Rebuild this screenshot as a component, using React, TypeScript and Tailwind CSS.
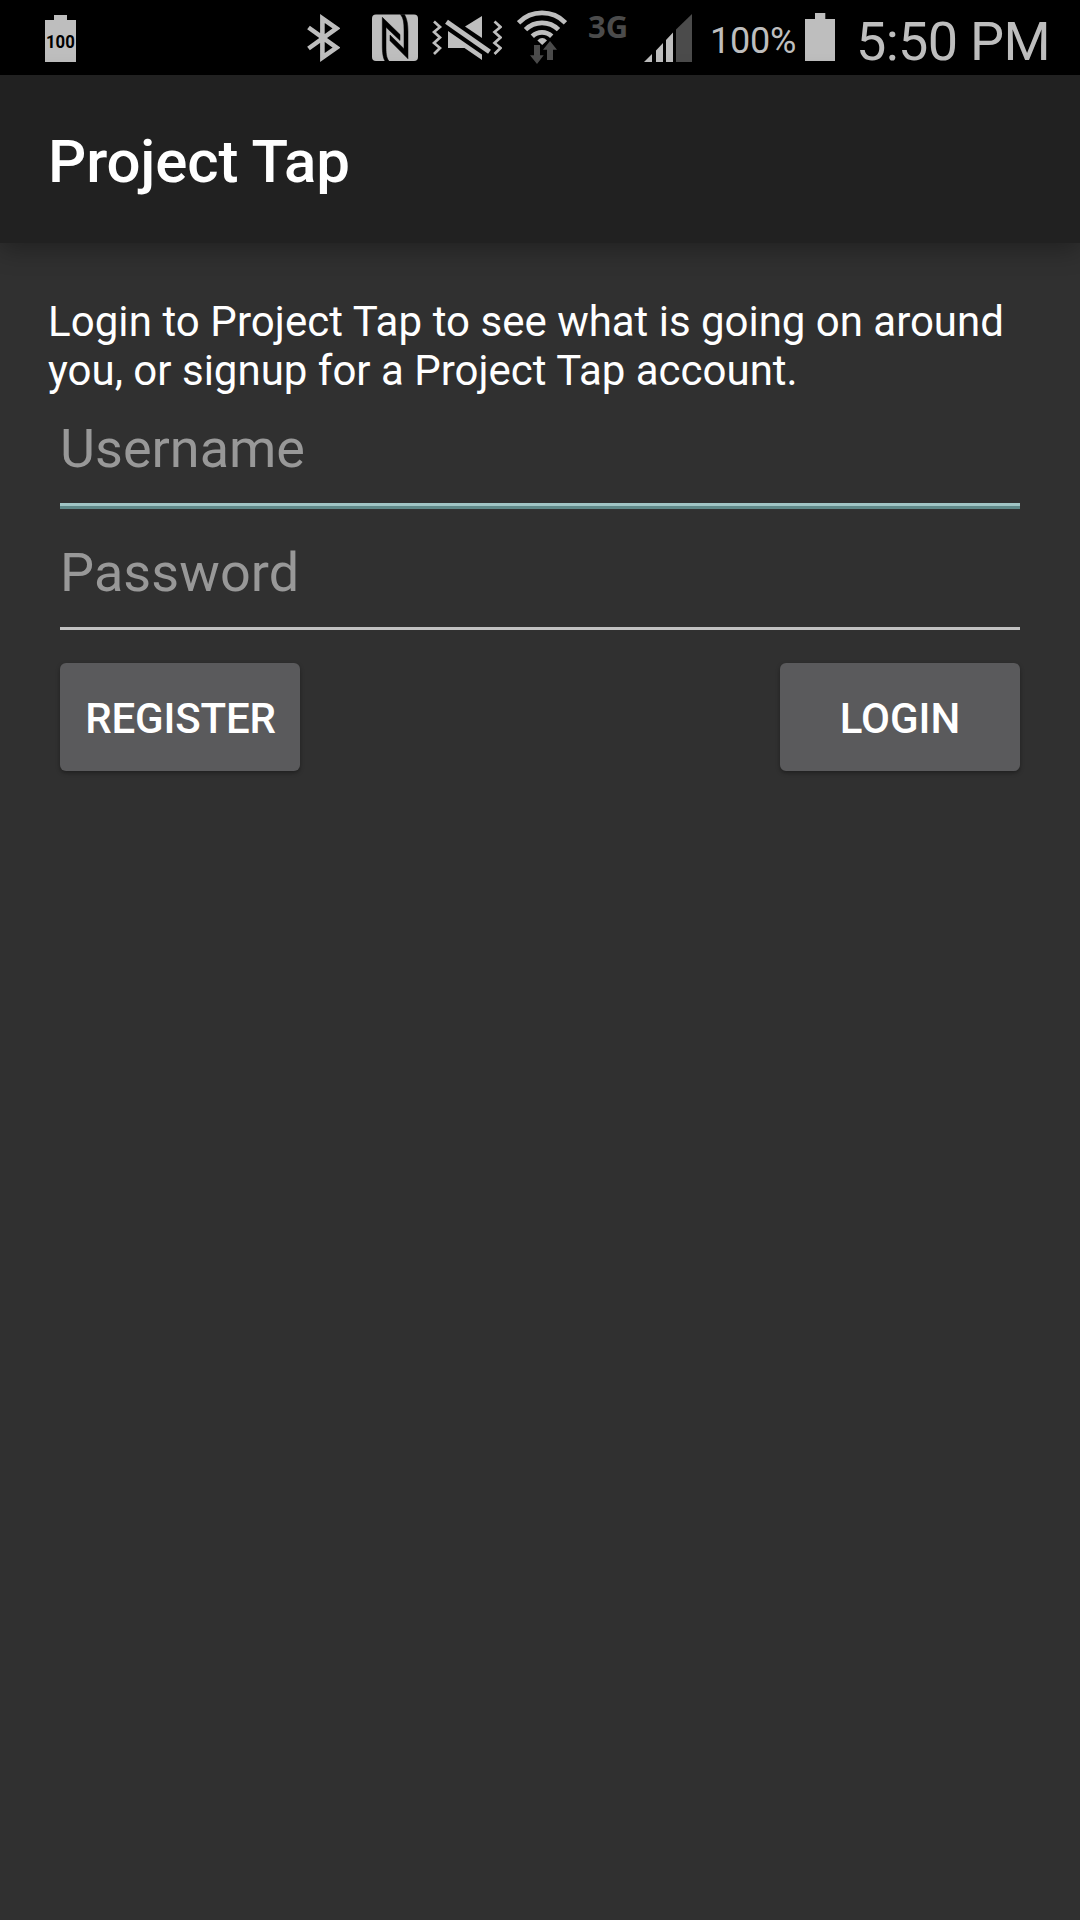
import React from "react";

const LIGHT = "#bebebe";
const DIM = "#4b4b4b";

function Battery100() {
  return (
    <div className="relative h-[75px] w-[31px] shrink-0">
      <svg className="block" width="31" height="75" viewBox="45 0 31 75">
        <path d="M45 20h9v-5h13v5h9v42H45z" fill={LIGHT} />
      </svg>
      <span className="absolute top-[31px] left-[1px] w-[30px] origin-left scale-x-[0.88] text-[19px] leading-[22px] font-bold whitespace-nowrap text-black">
        100
      </span>
    </div>
  );
}

function Bluetooth() {
  return (
    <svg className="ml-[231px] shrink-0" width="33" height="75" viewBox="307 0 33 75">
      <path
        d="M308.500 27.500L336.500 47.600L322.400 57.500V18.500L336.500 28.400L308.500 48.500"
        fill="none"
        stroke={LIGHT}
        strokeWidth="4.6"
        strokeMiterlimit="10"
      />
    </svg>
  );
}

function Nfc() {
  return (
    <svg className="ml-[32px] shrink-0" width="46" height="75" viewBox="372 0 46 75">
      <rect x="372" y="14.5" width="46" height="46.500" rx="4" fill={LIGHT} />
      <g fill="#000" stroke="#000" strokeWidth="0.5">
        <path d="M382.300 17.300L400 34.500V40.500L386 27.300V48C386 55 387 59 389 61H385C383 58 382.300 52 382.300 46Z" />
        <path d="M390 35L404 48.700V30C404 23 403.500 18 400.500 14.500H404.500C407 19 408 24 408 32V58.800L390 40.700Z" />
      </g>
    </svg>
  );
}

function Muted() {
  return (
    <svg className="ml-[14px] shrink-0" width="70" height="75" viewBox="432 0 70 75">
      <g fill="none" stroke={LIGHT} strokeWidth="2.7">
        <path d="M434 21.500L440 27L434 32L440 37.500L434 43L440 48L434 54" />
        <path d="M494.500 21.500L500.500 27L494.500 32L500.500 37.500L494.500 43L500.500 48L494.500 54" />
      </g>
      <path d="M482 16V38L465 26.500Z" fill={LIGHT} />
      <path d="M448 31L482 54.500V60L464.500 48H448Z" fill={LIGHT} />
      <path d="M446.500 21.800L489.500 51.800" stroke={LIGHT} strokeWidth="5" />
    </svg>
  );
}

function Wifi() {
  return (
    <svg className="ml-[15px] shrink-0" width="50" height="75" viewBox="517 0 50 75">
      <g fill="none" stroke={LIGHT} strokeWidth="4.8">
        <path d="M518.500 22.800A33 33 0 0 1 565.500 22.800" />
        <path d="M525.500 29.600A23.500 23.500 0 0 1 558.500 29.600" />
        <path d="M532.300 36.200A14 14 0 0 1 551.700 36.200" />
      </g>
      <path d="M537.400 40.500Q542.300 35.600 547 40.500L542.200 45Z" fill={LIGHT} />
      <path d="M534 45h6v10.300h3.700L537 64l-7-8.700h4z" fill={DIM} />
      <path d="M547 60V49.700h-4L550 41l7 8.700h-4V60z" fill={DIM} />
    </svg>
  );
}

function Signal() {
  return (
    <svg className="ml-[17px] shrink-0" width="48" height="75" viewBox="644 0 48 75">
      <path d="M644 62L652 54V62ZM656 50.500L663 43V62H656ZM666 40L673 32.500V62H666Z" fill={LIGHT} />
      <path d="M676 29.500L692 14V62H676Z" fill={DIM} />
    </svg>
  );
}

function Battery() {
  return (
    <svg className="shrink-0" width="30" height="75" viewBox="805 0 30 75">
      <path d="M805 19h10v-6h10.300v6H835v42H805z" fill={LIGHT} />
    </svg>
  );
}

function StatusBar() {
  return (
    <div className="flex h-[75px] items-start bg-black pl-[45px] text-[#bebebe]">
      <Battery100 />
      <Bluetooth />
      <Nfc />
      <Muted />
      <Wifi />
      <span className="ml-[21px] w-[39px] pt-[5px] font-['Open_Sans'] text-[31px] leading-[42px] font-bold whitespace-nowrap text-[#4b4b4b]">
        3G
      </span>
      <Signal />
      <span className="ml-[18px] w-[95px] pt-[20px] text-[36px] leading-[42px] tracking-[-0.2px] whitespace-nowrap">
        100%
      </span>
      <Battery />
      <span className="ml-[21px] pt-[10px] text-[54px] leading-[64px] font-[380] tracking-[-0.7px] whitespace-nowrap">
        5:50 PM
      </span>
    </div>
  );
}

export default function App() {
  return (
    <div className="flex min-h-[1920px] w-[1080px] flex-col overflow-hidden bg-[#303030] font-['Roboto',sans-serif] text-white">
      <StatusBar />
      <header className="z-10 flex h-[168px] items-center bg-[#212121] px-12 pt-[6px] shadow-[0_6px_24px_rgba(0,0,0,0.32)]">
        <h1 className="text-[60px] leading-[70px] font-medium tracking-[-0.15px]">Project Tap</h1>
      </header>
      <main className="flex flex-col px-12 pt-[54px]">
        <p className="text-[42px] leading-[49px] whitespace-nowrap">
          <span className="tracking-[0.07px]">Login to Project Tap to </span>
          <span className="tracking-[-0.02px]">see what is going on around</span>
          <br />
          you, or signup for a Project Tap account.
        </p>
        <form className="flex flex-col px-3" onSubmit={(e) => e.preventDefault()}>
          <input
            type="text"
            placeholder="Username"
            className="mt-[22px] h-[63px] w-full bg-transparent text-[54px] leading-[63px] outline-none placeholder:text-[#989898] placeholder:opacity-100"
          />
          <div className="mt-[23px] h-[6px] border-t-[3px] border-[#a0c4c4] bg-[#5f8888]" />
          <input
            type="password"
            placeholder="Password"
            className="mt-[32px] h-[63px] w-full bg-transparent text-[54px] leading-[63px] tracking-[0.1px] outline-none placeholder:text-[#989898] placeholder:opacity-100"
          />
          <div className="mt-[23px] h-[3px] bg-[#c1c1c1]" />
          <div className="mt-[33px] flex justify-between">
            <button className="h-[108px] w-[240px] rounded-[6px] bg-[#5a5a5c] pt-[2px] pl-[1px] text-[42px] leading-[49px] font-medium tracking-[-0.15px] shadow-[0_2px_4px_rgba(0,0,0,0.35)]">
              REGISTER
            </button>
            <button className="h-[108px] w-[240px] rounded-[6px] bg-[#5a5a5c] pt-[2px] text-[42px] leading-[49px] font-medium shadow-[0_2px_4px_rgba(0,0,0,0.35)]">
              LOGIN
            </button>
          </div>
        </form>
      </main>
    </div>
  );
}
